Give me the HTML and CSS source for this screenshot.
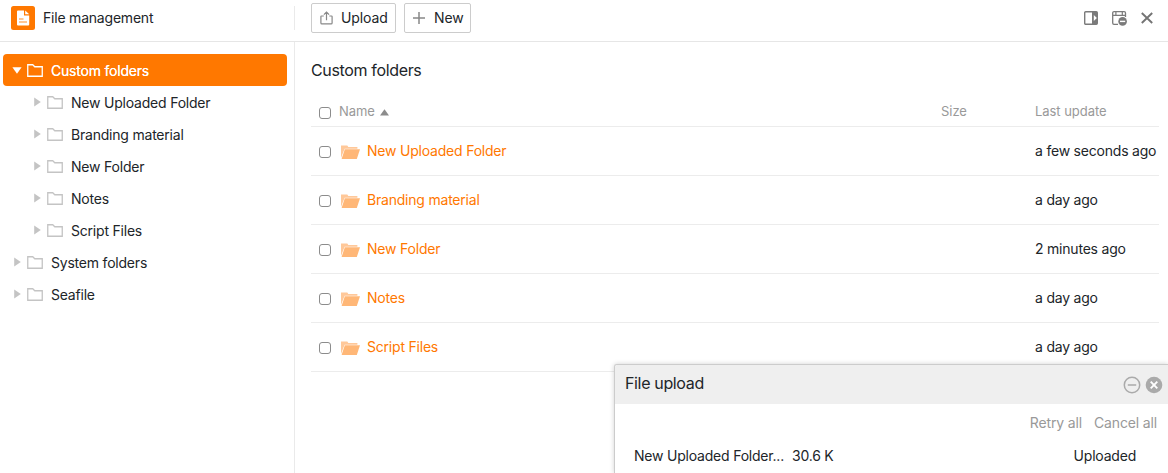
FILE: index.html
```html
<!DOCTYPE html>
<html lang="en">
<head>
<meta charset="utf-8">
<title>File management</title>
<link rel="stylesheet" href="styles.css">
</head>
<body>
<svg class="sprite" width="0" height="0">
  <symbol id="folder" viewBox="0 0 16 13"><path d="M.75 12.25V.75h5l2 2h7.5v9.5z" fill="none" stroke="currentColor" stroke-width="1.3"/></symbol>
  <symbol id="right" viewBox="0 0 7 10"><path d="M.2.6 6.8 5 .2 9.4z" fill="currentColor"/></symbol>
  <symbol id="open" viewBox="0 0 19 14"><path d="M0 13V.6h6.3l1 1.5h9.1v1.6H3.6z" fill="#ffc899"/><path d="M3.800 4.300H19L15.800 14H.6z" fill="#ffb777"/></symbol>
</svg>
<div class="app">
  <header class="header">
    <div class="brand">
      <svg class="logo" viewBox="0 0 24 24"><rect width="24" height="24" rx="2.5" fill="#ff7800"/><path d="M7 4.400h6v5h5.200v9.200a1 1 0 0 1-1 1H7a1 1 0 0 1-1-1V5.400a1 1 0 0 1 1-1z" fill="#fff"/><path d="M14.200 4.400v3.900h4z" fill="#fff"/><path d="M8 13h4.500M8 16h8" stroke="#ff8f2b" stroke-width="1.200"/></svg>
      <span>File management</span>
    </div>
    <div class="toolbar">
      <button class="btn upload"><svg width="14" height="14" viewBox="0 0 14 14" fill="none" stroke="#888" stroke-width="1.200"><path d="M3.800 5H1.500a.6.6 0 0 0-.6.6v6.300a1 1 0 0 0 1 1h9.200a1 1 0 0 0 1-1V5.600a.6.6 0 0 0-.6-.6H9.300M6.500 9.300V1.200M3.900 3.700l2.600-2.600 2.600 2.600"/></svg><span>Upload</span></button>
      <button class="btn new"><svg width="12" height="12" viewBox="0 0 12 12" stroke="#888" stroke-width="1.500"><path d="M6 0v12M0 6h12"/></svg><span>New</span></button>
    </div>
    <div class="window-actions">
      <svg width="14" height="14" viewBox="0 0 14 14"><rect x=".7" y=".7" width="12.600" height="12.600" rx="1" fill="none" stroke="#7b7b7b" stroke-width="1.400"/><path d="M8 1h5v12H8z" fill="#7b7b7b"/><path d="M9.800 3.900 12.900 7l-3.100 3.100z" fill="#fff"/></svg>
      <svg width="15" height="15" viewBox="0 0 15 15"><path d="M6 13.300H2a1.300 1.300 0 0 1-1.300-1.300V2A1.300 1.300 0 0 1 2 .7h10.200A1.300 1.300 0 0 1 13.500 2v4M.7 4.300h12.800" fill="none" stroke="#7b7b7b" stroke-width="1.300"/><path d="M3.900 1v3M10.300 1v3" stroke="#7b7b7b" stroke-width="1.200"/><circle cx="10.600" cy="10.400" r="4.300" fill="#7b7b7b"/><path d="M8 10.400h5.200" stroke="#fff" stroke-width="1.400"/></svg>
      <svg width="12" height="12" viewBox="0 0 12 12" stroke="#747474" stroke-width="1.900"><path d="m.8 1 10.400 10M11.200 1 .8 11"/></svg>
    </div>
  </header>
  <div class="body">
    <nav class="tree">
      <div class="node active"><svg class="down" viewBox="0 0 10 7"><path d="M.4.3h9.200L5 6.700z" fill="currentColor"/></svg><svg class="folder"><use href="#folder"/></svg><span>Custom folders</span></div>
      <div class="node child"><svg class="right"><use href="#right"/></svg><svg class="folder"><use href="#folder"/></svg><span>New Uploaded Folder</span></div>
      <div class="node child"><svg class="right"><use href="#right"/></svg><svg class="folder"><use href="#folder"/></svg><span>Branding material</span></div>
      <div class="node child"><svg class="right"><use href="#right"/></svg><svg class="folder"><use href="#folder"/></svg><span>New Folder</span></div>
      <div class="node child"><svg class="right"><use href="#right"/></svg><svg class="folder"><use href="#folder"/></svg><span>Notes</span></div>
      <div class="node child"><svg class="right"><use href="#right"/></svg><svg class="folder"><use href="#folder"/></svg><span>Script Files</span></div>
      <div class="node"><svg class="right"><use href="#right"/></svg><svg class="folder"><use href="#folder"/></svg><span>System folders</span></div>
      <div class="node"><svg class="right"><use href="#right"/></svg><svg class="folder"><use href="#folder"/></svg><span>Seafile</span></div>
    </nav>
    <main class="content">
      <h1 class="title">Custom folders</h1>
      <div class="row head"><i class="check"></i><span class="sort"><span>Name</span><svg width="9" height="7" viewBox="0 0 9 7"><path d="M0 6.500 4.500.3 9 6.500z" fill="#8c8c8c"/></svg></span><span>Size</span><span>Last update</span></div>
      <div class="row"><i class="check"></i><a class="name"><svg class="open"><use href="#open"/></svg><span>New Uploaded Folder</span></a><span></span><span>a few seconds ago</span></div>
      <div class="row"><i class="check"></i><a class="name"><svg class="open"><use href="#open"/></svg><span>Branding material</span></a><span></span><span>a day ago</span></div>
      <div class="row"><i class="check"></i><a class="name"><svg class="open"><use href="#open"/></svg><span>New Folder</span></a><span></span><span>2 minutes ago</span></div>
      <div class="row"><i class="check"></i><a class="name"><svg class="open"><use href="#open"/></svg><span>Notes</span></a><span></span><span>a day ago</span></div>
      <div class="row"><i class="check"></i><a class="name"><svg class="open"><use href="#open"/></svg><span>Script Files</span></a><span></span><span>a day ago</span></div>
    </main>
  </div>
  <section class="upload-panel">
    <div class="panel-head">
      <h2>File upload</h2>
      <svg width="18" height="18" viewBox="0 0 18 18"><circle cx="9" cy="9" r="7.700" fill="none" stroke="#aaa" stroke-width="1.500"/><path d="M4.800 9h8.400" stroke="#aaa" stroke-width="1.500"/></svg>
      <svg width="18" height="18" viewBox="0 0 18 18"><circle cx="9" cy="9" r="8.300" fill="#aaa"/><path d="m5.700 5.700 6.600 6.600M12.300 5.700l-6.600 6.600" stroke="#fff" stroke-width="1.900"/></svg>
    </div>
    <div class="panel-actions"><span>Retry all</span><span>Cancel all</span></div>
    <div class="panel-file"><span>New Uploaded Folder...</span><span>30.6 K</span><span class="status">Uploaded</span></div>
  </section>
</div>
</body>
</html>
```
FILE: styles.css
```css
* { box-sizing: border-box; }
body {
  margin: 0;
  font-family: Inter, Roboto, "Liberation Sans", sans-serif;
  font-size: 14px;
  letter-spacing: -0.21px;
  color: #212529;
  background: #fff;
}
h1, h2 { margin: 0; font-size: 16px; font-weight: 400; letter-spacing: -0.35px; }
svg { display: block; flex: none; }
span { white-space: nowrap; }
.sprite { position: absolute; }
.app { position: relative; height: 473px; overflow: hidden; display: flex; flex-direction: column; }

.header { height: 42px; flex: none; display: flex; border-bottom: 1px solid #e6e6e6; }
.brand { width: 295px; height: 24px; margin-top: 6px; padding-left: 11px; display: flex; align-items: center; gap: 8px; border-right: 1px solid #eaeaea; }
.brand span { padding-bottom: 2px; }
.logo { width: 24px; height: 24px; }
.toolbar { display: flex; gap: 8px; padding: 3px 0 0 16px; }
.btn {
  height: 30px; padding: 0 0 1px 8px; display: flex; align-items: center;
  border: 1px solid #ccc; border-radius: 2px; background: #fff;
  font: inherit; letter-spacing: -0.2px; color: inherit;
}
.btn span { padding-bottom: 1px; }
.upload { width: 85px; gap: 7px; letter-spacing: -0.3px; }
.new { width: 67px; gap: 9px; }
.btn { letter-spacing: -0.1px; }
.window-actions { margin-left: auto; padding-right: 15px; height: 36px; display: flex; align-items: center; gap: 14px; }

.body { flex: 1; display: flex; min-height: 0; }
.tree { width: 295px; flex: none; padding: 12px 7px 0 3px; border-right: 1px solid #eaeaea; }
.node { height: 32px; padding: 0 0 0 10px; display: flex; align-items: center; color: #c4c4c4; border-radius: 4px; }
.node span { color: #212529; margin: 0 0 0 8px; }
.child { padding-left: 30px; }
.right { width: 7px; height: 10px; margin-right: 6px; margin-left: 1px; }
.down { width: 10px; height: 7px; margin-right: 5px; margin-left: -1px; }
.folder { width: 16px; height: 13px; }
.active { background: #ff7800; color: #fff; }
.active span { color: #fff; text-shadow: 0 0 0.5px #fff; }

.content { flex: 1; padding: 18px 9px 0 16px; }
.title { height: 20px; line-height: 20px; }
.row {
  height: 49px; padding-left: 8px; display: grid; align-items: center;
  grid-template-columns: 22px 600px 94px 1fr; border-bottom: 1px solid #ececec;
}
.row span { padding-bottom: 2px; }
.head { height: 47px; padding-top: 17px; font-size: 13px; letter-spacing: -0.05px; color: #999; grid-template-columns: 20px 602px 94px 1fr; }
.row.head > span, .row.head .sort span { padding-bottom: 1px; }
.row.head > .sort { padding-bottom: 0; }
.check { width: 12px; height: 12px; margin-top: 2px; border: 1px solid #8c8c8c; border-radius: 3px; }
.sort { display: flex; align-items: center; gap: 5px; }
.sort svg { margin-top: 2px; }
.name { display: flex; align-items: center; gap: 7px; color: #ff7800; }
.open { width: 19px; height: 14px; margin-top: 1px; }

.upload-panel { position: absolute; left: 614px; top: 364px; width: 554px; height: 109px; background: #fff; border: solid #ccc; border-width: 1px 0 0 1px; border-radius: 3px 0 0 0; box-shadow: 0 0 5px rgba(0, 0, 0, 0.18); }
.panel-head { height: 39px; padding: 0 5px 0 10px; display: flex; align-items: center; gap: 4px; background: #efefef; border-radius: 2px 0 0 0; }
.panel-head h2 { margin-right: auto; padding-bottom: 3px; }
.panel-actions { height: 36px; padding-right: 11px; display: flex; justify-content: flex-end; align-items: center; gap: 12px; color: #999; letter-spacing: -0.15px; }
.panel-file { height: 30px; padding: 0 32px 0 19px; display: flex; align-items: center; gap: 8px; }
.status { margin-left: auto; }
```
